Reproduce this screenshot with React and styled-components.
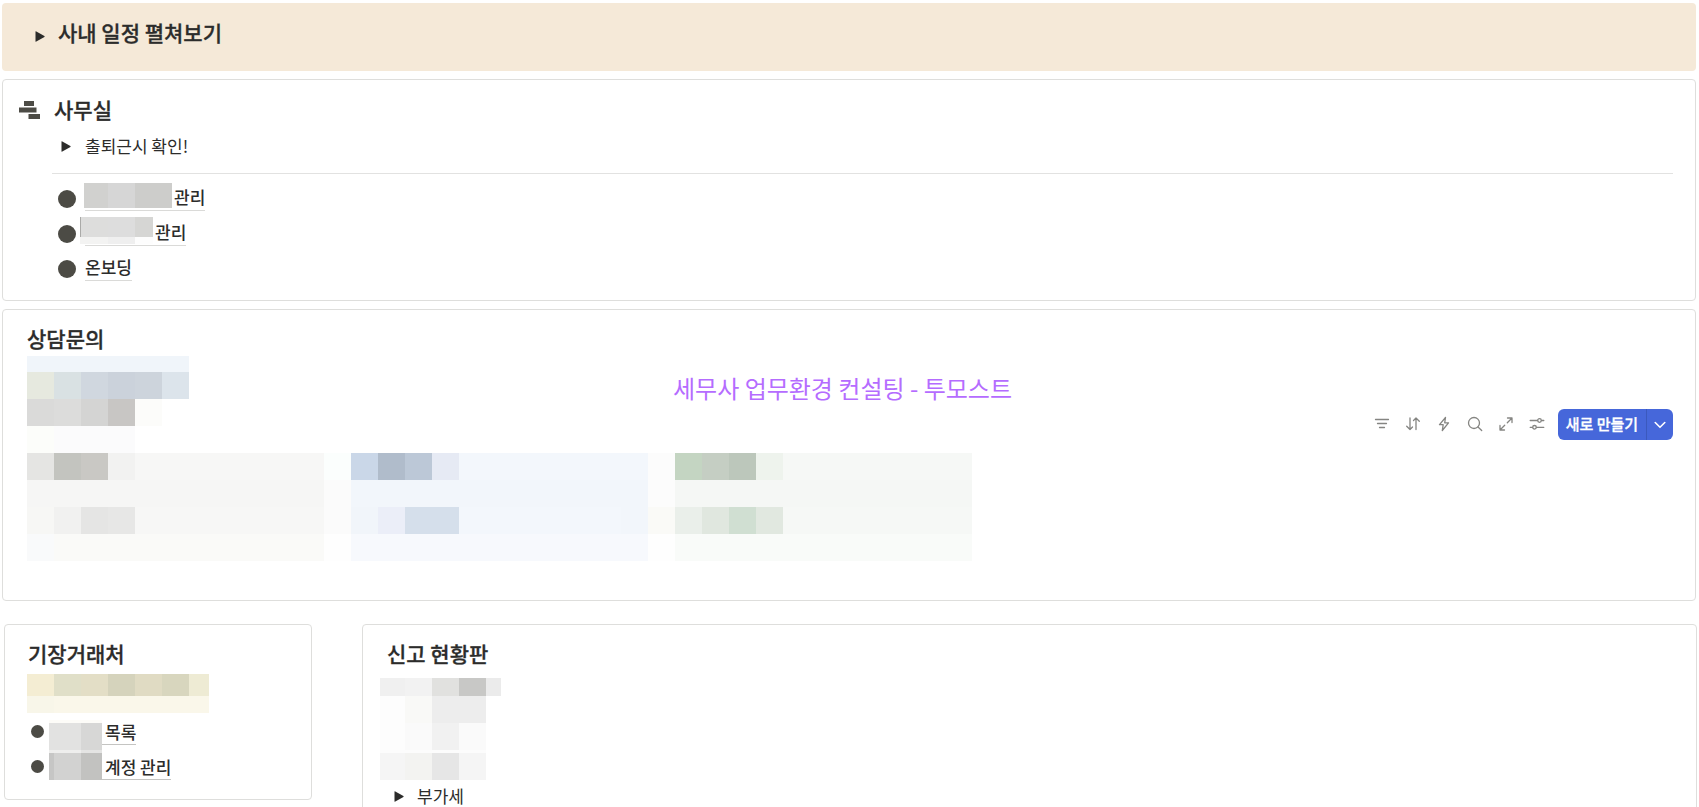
import React from "react";
import styled, { createGlobalStyle } from "styled-components";

const GlobalStyle = createGlobalStyle`
  * { box-sizing: border-box; }
  body {
    margin: 0;
    background: #fff;
    color: #2c2c2b;
    font-family: "Noto Sans CJK KR", "Noto Sans", sans-serif;
    font-size: 17px;
    line-height: 24px;
  }
  button { font: inherit; color: inherit; border: 0; background: none; padding: 0; cursor: pointer; }
  h2 { margin: 0; }
`;

const Page = styled.main`
  height: 100vh;
  overflow: hidden;
  padding: 3px 2px 0;
  display: flex;
  flex-direction: column;
  gap: 8px;
  & > * { flex-shrink: 0; }
`;

const Banner = styled.section`
  background: #f5e9d8;
  border-radius: 4px;
  padding: 14px 33px 24px;
  margin-right: 1px;
`;

const Card = styled.section`
  position: relative;
  border: 1px solid #dededc;
  border-radius: 4px;
  background: #fff;
  padding: ${(p) => p.$pad};
  margin-right: ${(p) => (p.$flush ? 0 : 1)}px;
`;

const Title = styled.h2`
  font-size: 21px;
  line-height: 30px;
  font-weight: 500;
  -webkit-text-stroke: 0.3px currentColor;
  margin-left: ${(p) => p.$indent || 0}px;
`;

const Toggle = styled.button`
  display: flex;
  align-items: center;
  gap: ${(p) => p.$gap}px;
  margin-left: ${(p) => p.$indent || 0}px;
  text-align: left;

  svg { margin-top: ${(p) => p.$drop || 0}px; }
`;

const OfficeHead = styled.div`
  display: flex;
  align-items: center;
  gap: 14px;

  svg { margin-top: 2px; }
`;

const OfficeBody = styled.div`
  margin-left: 33px;
  padding-top: 10px;
`;

const Divider = styled.hr`
  border: 0;
  height: 1px;
  background: #e2e2e1;
  margin: 15px 0 12px;
`;

const List = styled.ul`
  list-style: none;
  margin: 0;
  padding: 0 0 0 ${(p) => p.$indent || 0}px;
  display: flex;
  flex-direction: column;
  gap: 10px;
`;

const Item = styled.li`
  display: flex;
  align-items: center;
  gap: 9px;
  height: 25px;
`;

const BulletItem = styled(Item)`
  padding-bottom: 3px;
`;

const Dot = styled.span`
  width: ${(p) => p.$size}px;
  height: ${(p) => p.$size}px;
  border-radius: 50%;
  background: #4c4b45;
  flex: none;
`;

const PageLink = styled.a`
  display: flex;
  align-items: center;
  gap: 2px;
  height: 25px;
  color: inherit;
  text-decoration: none;
  font-weight: 500;
  border-bottom: 1px solid ${(p) => (p.$strong ? "#c4c4c2" : "#dadad8")};
  padding: ${(p) => (p.$strong ? "0 0 0 3px" : "0 0 2px")};
`;

const MosaicBox = styled.div`
  flex: none;
  margin: ${(p) => p.$margin || 0};
`;
const MosaicRow = styled.div`
  display: flex;
  height: ${(p) => p.$h}px;
`;
const MosaicCell = styled.span`
  width: ${(p) => p.$w}px;
  background: ${(p) => p.$c};
`;

const InquiryHead = styled.div`
  display: flex;
  justify-content: space-between;
  align-items: flex-end;
`;

const Tools = styled.div`
  display: flex;
  align-items: center;
  margin-bottom: 13px;
`;

const IconButton = styled.button`
  width: 31px;
  height: 31px;
  padding-bottom: 2px;
  display: grid;
  place-items: center;
  color: #858582;
`;

const NewGroup = styled.div`
  display: flex;
  height: 31px;
  margin-left: 6px;
  border-radius: 6px;
  overflow: hidden;
  background: #4667da;
  color: #fff;
`;
const NewButton = styled.button`
  width: 88px;
  padding-bottom: 2px;
  font-size: 15px;
  line-height: 29px;
  font-weight: 500;
  -webkit-text-stroke: 0.3px currentColor;
  color: #fff;
`;
const NewMenu = styled.button`
  width: 27px;
  display: grid;
  place-items: center;
  border-left: 1px solid #3b59bd;
  color: #fff;
`;

const Watermark = styled.p`
  position: absolute;
  top: 60px;
  left: 0;
  right: 13px;
  margin: 0;
  text-align: center;
  font-size: 24px;
  line-height: 36px;
  color: #b56cff;
  pointer-events: none;
`;

const Board = styled.div`
  display: flex;
`;

const Columns = styled.div`
  display: grid;
  grid-template-columns: 308px 1fr;
  gap: 50px;
  align-items: start;
  margin: 15px 0 0 2px;
`;

const ClientList = styled.div`
  display: flex;
  align-items: flex-start;
`;

function Mosaic({ rows, margin }) {
  return (
    <MosaicBox $margin={margin} aria-hidden="true">
      {rows.map(([h, cells], i) => (
        <MosaicRow key={i} $h={h}>
          {cells.map(([w, c], j) => (
            <MosaicCell key={j} $w={w} $c={c} />
          ))}
        </MosaicRow>
      ))}
    </MosaicBox>
  );
}

const Triangle = () => (
  <svg width="10" height="11" viewBox="0 0 10 11" aria-hidden="true">
    <path d="M1.300.4 9.400 5.100q.6.400 0 .8L1.300 10.600Q.5 11 .5 10.200V.8Q.5 0 1.300.4Z" fill="#2c2c2b" />
  </svg>
);

const OfficeIcon = () => (
  <svg width="21" height="19" viewBox="0 0 21 19" aria-hidden="true" fill="#4c4b45">
    <path d="M5 0h10v5H5zM0 6.500h17.500v5H0zM9.500 13H21v5H9.500z" />
  </svg>
);

const Icon = ({ children }) => (
  <svg width="16" height="16" viewBox="0 0 16 16" fill="none" stroke="currentColor" strokeWidth="1.300" strokeLinecap="round" strokeLinejoin="round" aria-hidden="true">
    {children}
  </svg>
);

const tools = [
  ["필터", <path d="M1.500 3.500h13M3.500 7.500h9M5.500 11.500h5" />],
  ["정렬", <path d="M5 2v11.500M1.700 10.200 5 13.500l2.500-2.500M11 13.500V2M8.500 4.500 11 2l3.300 3.300" />],
  ["자동화", <path d="M9.500 1.500 3.500 8.700h3.700L6.300 14.500l6.200-7.700H8.700z" />],
  ["검색", <><circle cx="7" cy="7" r="5.500" /><path d="m11 11 3.700 3.500" /></>],
  ["확장", <path d="M9.500 2h4.500v4.500M14 2 9.300 6.700M6.500 14H2V9.500M2 14l4.700-4.700" />],
  ["설정", <><path d="M1.200 4.500h7.300M12.500 4.500h2.300M1.200 11.300h2.300M7.500 11.300h7.300" /><circle cx="10.500" cy="4.500" r="1.800" /><circle cx="5.500" cy="11.300" r="1.800" /></>],
];

const cells = (width, colors) => colors.map((c) => [width, c]);

const officeLinks = [
  {
    label: "관리",
    margin: "0 0 3px -1px",
    rows: [[25, [[24, "#d1d1cf"], [27, "#d6d6d6"], [37, "#cdcdcb"]]]],
  },
  {
    label: "관리",
    margin: "0 0 3px -5px",
    rows: [
      [20, [[1, "#aaaaa8"], [27, "#dddddc"], [27, "#dddddd"], [18, "#d6d6d4"]]],
      [7, [[28, "#f3f3f2"], [27, "#efefef"], [18, "#fdfdfd"]]],
    ],
  },
  { label: "온보딩" },
];

const inquiryTabs = [
  [16, [[162, "#f0f5fa"]]],
  [27, cells(27, ["#e6e9df", "#d9e1e3", "#d0d7df", "#cbd2db", "#cdd4dc", "#dce4eb"])],
  [27, cells(27, ["#dadad9", "#dcdcdb", "#d4d4d3", "#c8c6c4", "#fcfcfa"])],
  [27, [[27, "#fcfdfa"], [81, "#fbfbfc"]]],
];

const board = [
  [
    [27, [[27, "#e5e5e3"], [27, "#c3c4bf"], [27, "#c9c8c4"], [27, "#f2f2f1"], [189, "#f7f7f6"]]],
    [27, [[297, "#f6f6f5"]]],
    [27, [[27, "#f7f7f5"], [27, "#f1f1f0"], [27, "#e5e5e4"], [27, "#e7e7e6"], [189, "#f7f7f6"]]],
    [27, [[27, "#f9fafb"], [270, "#fafaf8"]]],
  ],
  [[27, [[27, "#fbfefd"]]], [54, [[27, "#fbfbfb"]]], [27, [[27, "#fefefe"]]]],
  [
    [27, [[27, "#cad7e8"], [27, "#b0bccb"], [27, "#bcc8d7"], [27, "#e6eaf4"], [189, "#f3f7fc"]]],
    [27, [[297, "#f2f6fb"]]],
    [27, [[27, "#f1f5fa"], [27, "#ebeef8"], [54, "#d5dfeb"], [162, "#f3f7fc"], [27, "#f2f6fb"]]],
    [27, [[297, "#f7f9fd"]]],
  ],
  [[54, [[27, "#fcfcfc"]]], [27, [[27, "#fafaf7"]]], [27, [[27, "#fefefe"]]]],
  [
    [27, [[27, "#c4d5c2"], [27, "#c5cec3"], [27, "#bcc7bb"], [27, "#eef3ed"], [189, "#f6f8f6"]]],
    [27, [[297, "#f5f7f5"]]],
    [27, [[27, "#eaefea"], [27, "#e0e7df"], [27, "#d0dfd2"], [27, "#e1e8e0"], [189, "#f6f8f6"]]],
    [27, [[297, "#f9fbf9"]]],
  ],
];

const clientTabs = [
  [22, [...cells(27, ["#f4edd3", "#e0dfc8", "#e3dec6", "#d5d3bc", "#e0dbc3", "#d8d6be"]), [20, "#eeebd4"]]],
  [17, [[27, "#f8f6e9"], [155, "#faf7ea"]]],
];

const clientNames = [
  [3, [[53, "#fdfcf8"]]],
  [27, [[32, "#e2e2e1"], [21, "#d7d7d6"]]],
  [3, [[32, "#eeeeed"], [21, "#e4e4e3"]]],
  [27, [[5, "#c6c6c5"], [27, "#d2d2d1"], [21, "#c2c2c0"]]],
];

const reportRows = [
  [18, [[25, "#f0f0f0"], [27, "#f2f2f2"], [27, "#e1e1df"], [27, "#c8c8c6"], [15, "#ebebeb"]]],
  [27, [[25, "#fdfdfd"], [27, "#f9f9f7"], [54, "#ededed"]]],
  [27, [[25, "#fdfdfd"], [27, "#fafafa"], [27, "#f1f1f1"], [27, "#fafafa"]]],
  [3, [[106, "#fcfcfc"]]],
  [27, [[25, "#f5f5f5"], [27, "#f3f3f1"], [27, "#e6e6e6"], [27, "#f5f5f5"]]],
];

export default function App() {
  return (
    <Page>
      <GlobalStyle />
      <Banner>
        <Toggle $gap={13} $drop={9}>
          <Triangle />
          <Title as="span">사내 일정 펼쳐보기</Title>
        </Toggle>
      </Banner>

      <Card $pad="14px 22px 19px 16px">
        <OfficeHead>
          <OfficeIcon />
          <Title>사무실</Title>
        </OfficeHead>
        <OfficeBody>
          <Toggle $gap={14} $indent={9}>
            <Triangle />
            출퇴근시 확인!
          </Toggle>
          <Divider />
          <List $indent={6}>
            {officeLinks.map((link, i) => (
              <Item key={i}>
                <Dot $size={18} />
                <PageLink href="#">
                  {link.rows && <Mosaic rows={link.rows} margin={link.margin} />}
                  {link.label}
                </PageLink>
              </Item>
            ))}
          </List>
        </OfficeBody>
      </Card>

      <Card $pad="13px 22px 39px 24px">
        <Title>상담문의</Title>
        <InquiryHead>
          <Mosaic rows={inquiryTabs} margin="3px 0 0" />
          <Tools>
            {tools.map(([label, shape]) => (
              <IconButton key={label} aria-label={label}>
                <Icon>{shape}</Icon>
              </IconButton>
            ))}
            <NewGroup>
              <NewButton>새로 만들기</NewButton>
              <NewMenu aria-label="더 보기">
                <svg width="12" height="8" viewBox="0 0 12 8" fill="none" stroke="currentColor" strokeWidth="1.600" strokeLinecap="round" strokeLinejoin="round" aria-hidden="true">
                  <path d="m1.200 1.500 4.800 4.800 4.800-4.800" />
                </svg>
              </NewMenu>
            </NewGroup>
          </Tools>
        </InquiryHead>
        <Board>
          {board.map((rows, i) => (
            <Mosaic key={i} rows={rows} />
          ))}
        </Board>
        <Watermark>세무사 업무환경 컨설팅 - 투모스트</Watermark>
      </Card>

      <Columns>
        <Card $flush $pad="13px 22px 19px 22px">
          <Title $indent={1}>기장거래처</Title>
          <Mosaic rows={clientTabs} margin="6px 0 7px" />
          <ClientList>
            <List $indent={4}>
              <BulletItem><Dot $size={13} /></BulletItem>
              <BulletItem><Dot $size={13} /></BulletItem>
            </List>
            <Mosaic rows={clientNames} margin="0 0 0 5px" />
            <List>
              <Item><PageLink $strong href="#">목록</PageLink></Item>
              <Item><PageLink $strong href="#">계정 관리</PageLink></Item>
            </List>
          </ClientList>
        </Card>
        <Card $flush $pad="13px 22px 60px 17px">
          <Title $indent={7}>신고 현황판</Title>
          <Mosaic rows={reportRows} margin="10px 0 4px" />
          <Toggle $gap={13} $indent={14}>
            <Triangle />
            부가세
          </Toggle>
        </Card>
      </Columns>
    </Page>
  );
}
